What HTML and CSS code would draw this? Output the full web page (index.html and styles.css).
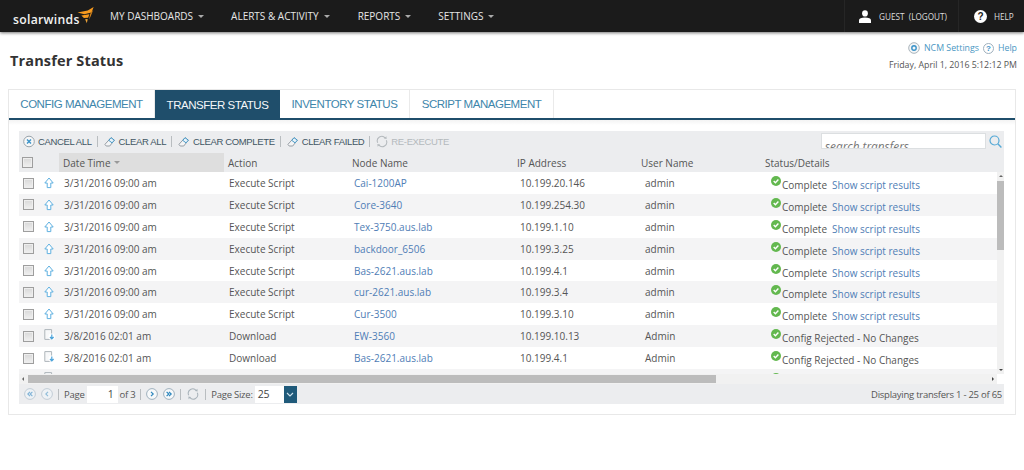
FILE: index.html
```html
<!DOCTYPE html>
<html lang="en">
<head>
<meta charset="utf-8">
<title>Transfer Status</title>
<link rel="stylesheet" href="styles.css">
</head>
<body>
<svg class="defs" width="0" height="0" aria-hidden="true">
  <symbol id="i-up" viewBox="0 0 10 12"><path d="M5 1 9.200 6H6.800v4.600H3.200V6H.8z" fill="#fff" stroke="#5fb0e0" stroke-width="1" stroke-linejoin="round"/></symbol>
  <symbol id="i-dl" viewBox="0 0 12 12"><path d="M.8.6h6.800v9.800H.8z" fill="#f7f8f9" stroke="#aeb5ba"/><circle cx="7.800" cy="7.800" r="3.300" fill="#fff"/><path d="M7.800 5.400v4.400M6 8l1.800 1.900L9.600 8" fill="none" stroke="#4ba3da" stroke-width="1.200"/></symbol>
  <symbol id="i-ok" viewBox="0 0 10 10"><circle cx="5" cy="5" r="5" fill="#63b84f"/><path d="M2.700 5.100 4.400 6.800 7.400 3.600" fill="none" stroke="#fff" stroke-width="1.400"/></symbol>
  <symbol id="i-eraser" viewBox="0 0 13 13"><path d="M1 9.600 7.600 2.400l3.600 2.600-5 6.400H2.400z" fill="#f4f5f6" stroke="#8f979e" stroke-linejoin="round"/><path d="M7.600 2.400l3.600 2.600-2.400 3-3.600-2.700z" fill="#e9f3f9" stroke="#3d94c6"/></symbol>
  <symbol id="i-refresh" viewBox="0 0 14 14"><path d="M2 8.400A5.200 5.200 0 0 1 10.800 3M12 5.600A5.200 5.200 0 0 1 3.200 11" fill="none" stroke="currentColor" stroke-width="1.200"/><path d="M9.400 3.600 12.400 4l-.3-3zM4.600 10.400 1.600 10l.3 3z" fill="currentColor"/></symbol>
  <symbol id="i-first" viewBox="0 0 12 12"><circle cx="6" cy="6" r="5.400" fill="#eef2f5" stroke="#c2cdd6"/><path d="M6 3.800 3.800 6 6 8.200M8.400 3.800 6.200 6l2.200 2.200" fill="none" stroke="#7fb2d6" stroke-width="1.100"/></symbol>
  <symbol id="i-prev" viewBox="0 0 12 12"><circle cx="6" cy="6" r="5.400" fill="#eef2f5" stroke="#c2cdd6"/><path d="M7 3.800 4.800 6 7 8.200" fill="none" stroke="#8fbcd9" stroke-width="1.100"/></symbol>
  <symbol id="i-next" viewBox="0 0 12 12"><circle cx="6" cy="6" r="5.400" fill="#f7f9fa" stroke="#9fb0bd"/><path d="M5 3.800 7.200 6 5 8.200" fill="none" stroke="#2d86bd" stroke-width="1.200"/></symbol>
  <symbol id="i-last" viewBox="0 0 12 12"><circle cx="6" cy="6" r="5.400" fill="#f7f9fa" stroke="#9fb0bd"/><path d="M3.600 3.800 5.800 6 3.600 8.200M6 3.800 8.200 6 6 8.200" fill="none" stroke="#2d86bd" stroke-width="1.200"/></symbol>
</svg>

<header class="topbar">
  <a class="logo">
    <span class="logo-text">solarwinds</span>
    <svg class="logo-flare" viewBox="0 0 20 20"><path d="M0 6.500 12 4 19 0 16.500 6.500 8 8.500Z" fill="#f79a1e"/><path d="M4.500 10 14 8.500 12.500 12.500 7.500 13Z" fill="#f79a1e"/><path d="M9 14.500 12 14 11 19Z" fill="#f0a63a"/><path d="M15 8 18.500 3.500 15.500 11 13.500 15Z" fill="#d9861a"/></svg>
  </a>
  <nav class="nav">
    <a class="nav-item">MY DASHBOARDS<i class="caret"></i></a>
    <a class="nav-item nav-alerts">ALERTS &amp; ACTIVITY<i class="caret"></i></a>
    <a class="nav-item">REPORTS<i class="caret"></i></a>
    <a class="nav-item">SETTINGS<i class="caret"></i></a>
  </nav>
  <div class="user-box">
    <svg class="user-icon" viewBox="0 0 12 13"><ellipse cx="6" cy="3.400" rx="2.900" ry="3.100" fill="#fff"/><path d="M0 13V10.200C0 8.400 2.400 7.400 6 7.400s6 1 6 2.800V13Z" fill="#fff"/></svg>
    <span class="top-label">GUEST&nbsp; (LOGOUT)</span>
  </div>
  <div class="help-box">
    <span class="help-icon">?</span>
    <span class="top-label">HELP</span>
  </div>
</header>

<section class="page-head">
  <h1 class="title">Transfer Status</h1>
  <div class="head-right">
    <div class="head-links">
      <svg class="mini" viewBox="0 0 12 12"><circle cx="6" cy="6" r="5.300" fill="#f4f6f7" stroke="#aab4bb"/><circle cx="6" cy="6" r="2.200" fill="none" stroke="#3a92c8" stroke-width="1.400"/></svg>
      <a class="link-blue">NCM Settings</a>
      <span class="mini-q">?</span>
      <a class="link-blue">Help</a>
    </div>
    <div class="head-date">Friday, April 1, 2016 5:12:12 PM</div>
  </div>
</section>

<main class="panel">
  <div class="tabs">
    <a class="tab tab-config">CONFIG MANAGEMENT</a>
    <a class="tab tab-active">TRANSFER STATUS</a>
    <a class="tab tab-inv">INVENTORY STATUS</a>
    <a class="tab tab-script">SCRIPT MANAGEMENT</a>
  </div>
  <div class="panel-body">
    <div class="toolbar">
      <button class="tool tool-cancel"><svg class="tool-icon" viewBox="0 0 12 12"><circle cx="6" cy="6" r="5.300" fill="#f6f7f8" stroke="#9aa4ab"/><path d="M4 4 8 8M8 4 4 8" stroke="#3a92c8" stroke-width="1.400"/></svg>CANCEL ALL</button>
      <span class="tool-sep"></span>
      <button class="tool"><svg class="tool-icon"><use href="#i-eraser"/></svg>CLEAR ALL</button>
      <span class="tool-sep"></span>
      <button class="tool"><svg class="tool-icon"><use href="#i-eraser"/></svg>CLEAR COMPLETE</button>
      <span class="tool-sep"></span>
      <button class="tool"><svg class="tool-icon"><use href="#i-eraser"/></svg>CLEAR FAILED</button>
      <span class="tool-sep"></span>
      <button class="tool tool-off"><svg class="tool-icon"><use href="#i-refresh"/></svg>RE-EXECUTE</button>
      <div class="search">
        <span class="search-box"><span class="search-text">search transfers</span></span>
        <svg class="search-icon" viewBox="0 0 13 13"><circle cx="5.500" cy="5.500" r="4.500" fill="none" stroke="#55a9d6" stroke-width="1.200"/><path d="M8.800 8.800 12.400 12.400" stroke="#55a9d6" stroke-width="1.400"/></svg>
      </div>
    </div>

    <div class="grid-head grid-cols">
      <span class="hc hc-check"><i class="check"></i></span>
      <span class="hc hc-sorted">Date Time<i class="sort"></i></span>
      <span class="hc">Action</span>
      <span class="hc">Node Name</span>
      <span class="hc">IP Address</span>
      <span class="hc">User Name</span>
      <span class="hc">Status/Details</span>
    </div>

    <div class="grid-view">
      <div class="rows">
        <div class="row grid-cols"><span class="c c-sel"><i class="check"></i><svg class="ti-up"><use href="#i-up"/></svg></span><span class="c c-date">3/31/2016 09:00 am</span><span class="c c-act">Execute Script</span><a class="c c-node">Cai-1200AP</a><span class="c c-ip">10.199.20.146</span><span class="c c-user">admin</span><span class="c c-stat"><svg class="ok"><use href="#i-ok"/></svg>Complete<a class="show">Show script results</a></span></div>
        <div class="row alt grid-cols"><span class="c c-sel"><i class="check"></i><svg class="ti-up"><use href="#i-up"/></svg></span><span class="c c-date">3/31/2016 09:00 am</span><span class="c c-act">Execute Script</span><a class="c c-node">Core-3640</a><span class="c c-ip">10.199.254.30</span><span class="c c-user">admin</span><span class="c c-stat"><svg class="ok"><use href="#i-ok"/></svg>Complete<a class="show">Show script results</a></span></div>
        <div class="row grid-cols"><span class="c c-sel"><i class="check"></i><svg class="ti-up"><use href="#i-up"/></svg></span><span class="c c-date">3/31/2016 09:00 am</span><span class="c c-act">Execute Script</span><a class="c c-node">Tex-3750.aus.lab</a><span class="c c-ip">10.199.1.10</span><span class="c c-user">admin</span><span class="c c-stat"><svg class="ok"><use href="#i-ok"/></svg>Complete<a class="show">Show script results</a></span></div>
        <div class="row alt grid-cols"><span class="c c-sel"><i class="check"></i><svg class="ti-up"><use href="#i-up"/></svg></span><span class="c c-date">3/31/2016 09:00 am</span><span class="c c-act">Execute Script</span><a class="c c-node">backdoor_6506</a><span class="c c-ip">10.199.3.25</span><span class="c c-user">admin</span><span class="c c-stat"><svg class="ok"><use href="#i-ok"/></svg>Complete<a class="show">Show script results</a></span></div>
        <div class="row grid-cols"><span class="c c-sel"><i class="check"></i><svg class="ti-up"><use href="#i-up"/></svg></span><span class="c c-date">3/31/2016 09:00 am</span><span class="c c-act">Execute Script</span><a class="c c-node">Bas-2621.aus.lab</a><span class="c c-ip">10.199.4.1</span><span class="c c-user">admin</span><span class="c c-stat"><svg class="ok"><use href="#i-ok"/></svg>Complete<a class="show">Show script results</a></span></div>
        <div class="row alt grid-cols"><span class="c c-sel"><i class="check"></i><svg class="ti-up"><use href="#i-up"/></svg></span><span class="c c-date">3/31/2016 09:00 am</span><span class="c c-act">Execute Script</span><a class="c c-node">cur-2621.aus.lab</a><span class="c c-ip">10.199.3.4</span><span class="c c-user">admin</span><span class="c c-stat"><svg class="ok"><use href="#i-ok"/></svg>Complete<a class="show">Show script results</a></span></div>
        <div class="row grid-cols"><span class="c c-sel"><i class="check"></i><svg class="ti-up"><use href="#i-up"/></svg></span><span class="c c-date">3/31/2016 09:00 am</span><span class="c c-act">Execute Script</span><a class="c c-node">Cur-3500</a><span class="c c-ip">10.199.3.10</span><span class="c c-user">admin</span><span class="c c-stat"><svg class="ok"><use href="#i-ok"/></svg>Complete<a class="show">Show script results</a></span></div>
        <div class="row alt grid-cols"><span class="c c-sel"><i class="check"></i><svg class="ti-dl"><use href="#i-dl"/></svg></span><span class="c c-date">3/8/2016 02:01 am</span><span class="c c-act">Download</span><a class="c c-node">EW-3560</a><span class="c c-ip">10.199.10.13</span><span class="c c-user">Admin</span><span class="c c-stat"><svg class="ok"><use href="#i-ok"/></svg>Config Rejected - No Changes</span></div>
        <div class="row grid-cols"><span class="c c-sel"><i class="check"></i><svg class="ti-dl"><use href="#i-dl"/></svg></span><span class="c c-date">3/8/2016 02:01 am</span><span class="c c-act">Download</span><a class="c c-node">Bas-2621.aus.lab</a><span class="c c-ip">10.199.4.1</span><span class="c c-user">Admin</span><span class="c c-stat"><svg class="ok"><use href="#i-ok"/></svg>Config Rejected - No Changes</span></div>
        <div class="row alt grid-cols"><span class="c c-sel"><i class="check"></i><svg class="ti-dl"><use href="#i-dl"/></svg></span><span class="c c-date"></span><span class="c c-act"></span><a class="c c-node"></a><span class="c c-ip"></span><span class="c c-user"></span><span class="c c-stat"><svg class="ok"><use href="#i-ok"/></svg></span></div>
      </div>
      <div class="vscroll">
        <i class="arrow-up"></i>
        <i class="vthumb"></i>
        <i class="arrow-down"></i>
      </div>
    </div>
    <div class="hbar">
      <div class="hscroll">
        <i class="arrow-left"></i>
        <i class="hthumb"></i>
        <i class="arrow-right"></i>
      </div>
      <div class="corner"></div>
    </div>

    <div class="pager">
      <svg class="pg-icon"><use href="#i-first"/></svg>
      <svg class="pg-icon"><use href="#i-prev"/></svg>
      <span class="pg-sep"></span>
      <span>Page</span>
      <span class="pg-input">1</span>
      <span>of 3</span>
      <span class="pg-sep"></span>
      <svg class="pg-icon"><use href="#i-next"/></svg>
      <svg class="pg-icon"><use href="#i-last"/></svg>
      <span class="pg-sep"></span>
      <svg class="pg-refresh"><use href="#i-refresh"/></svg>
      <span class="pg-sep"></span>
      <span>Page Size:</span>
      <span class="pg-size">25</span>
      <span class="pg-drop"><svg class="pg-chev" viewBox="0 0 8 5"><path d="M1 1 4 4 7 1" fill="none" stroke="#cfe3ee" stroke-width="1.100"/></svg></span>
      <span class="pg-count">Displaying transfers 1 - 25 of 65</span>
    </div>
  </div>
</main>
</body>
</html>
```

FILE: styles.css
```css
* { box-sizing: border-box; }
html, body { margin: 0; padding: 0; }
body {
  width: 1024px;
  height: 470px;
  overflow: hidden;
  background: #fff;
  font-family: "Open Sans", sans-serif;
  font-size: 10px;
  color: #555;
}
.defs { position: absolute; }

/* top bar */
.topbar {
  display: flex;
  align-items: center;
  height: 32px;
  background: #1b1b1b;
  box-shadow: 0 1px 3px rgba(0,0,0,.55);
  color: #e4e4e4;
  position: relative;
}
.logo { display: flex; align-items: flex-start; width: 110px; height: 32px; padding-left: 13px; }
.logo-text { font-size: 12.200px; font-weight: 600; color: #f2f2f2; margin-top: 11px; letter-spacing: .3px; line-height: 17px; }
.logo-flare { width: 18px; height: 17px; margin: 7px 0 0 -3px; flex: none; }
.nav { display: flex; flex: 1; }
.nav-item { display: flex; align-items: center; font-size: 10px; color: #e6e6e6; margin-right: 27px; white-space: nowrap; }
.nav-alerts { margin-right: 28px; }
.caret { width: 0; height: 0; margin-left: 5px; border: 3px solid transparent; border-top: 3px solid #aaa; border-bottom: 0; }
.user-box, .help-box { display: flex; align-items: center; height: 32px; border-left: 1px solid #262626; flex: none; }
.user-box { width: 114px; padding-left: 14px; }
.help-box { width: 66px; padding-left: 15px; }
.user-icon { width: 12px; height: 13px; margin-right: 8px; }
.top-label { font-size: 8.200px; color: #ddd; white-space: nowrap; }
.help-icon {
  width: 13px; height: 13px; border-radius: 50%; background: #fff; color: #1b1b1b;
  font: bold 10px/13px "Liberation Sans", sans-serif; text-align: center; margin-right: 7px;
}

/* page head */
.page-head {
  display: flex;
  justify-content: space-between;
  height: 57px;
  padding: 0 7px 0 10px;
}
.title { margin: 19px 0 0; font-size: 14.500px; line-height: 20px; font-weight: 700; color: #333; letter-spacing: .15px; }
.head-right { display: flex; flex-direction: column; align-items: flex-end; padding-top: 9px; }
.head-links { display: flex; align-items: center; height: 14px; font-size: 8.800px; }
.link-blue { color: #4a97c3; }
.mini { width: 12px; height: 12px; margin-right: 4px; }
.mini-q {
  width: 11px; height: 11px; margin: 0 4px 0 4px; border: 1px solid #9fb0bd; border-radius: 50%;
  font: bold 8px/9px "Liberation Sans", sans-serif; text-align: center; color: #3a92c8;
}
.head-date { font-size: 8.800px; line-height: 12px; margin-top: 4px; color: #555; }

/* panel */
.panel {
  margin: 0 8px;
  height: 326px;
  border: 1px solid #e8e8e8;
  background: #fff;
}
.tabs { display: flex; height: 30px; border-bottom: 2px solid #1f4e6b; }
.tab {
  display: flex; align-items: center; justify-content: center;
  font: 11.500px "Liberation Sans", sans-serif;
  letter-spacing: -.47px;
  white-space: nowrap;
  color: #3e86ab;
  border-right: 1px solid #eaeaea;
}
.tab-config { width: 146px; }
.tab-active { width: 125px; background: #1f4e6b; color: #f4f7f9; border-right: 0; margin-bottom: -2px; }
.tab-inv { width: 130px; }
.tab-script { width: 144px; }
.panel-body { padding: 11px 11px 0 10px; background: linear-gradient(#f3f3f3, #fff 5px); }

/* toolbar */
.toolbar {
  display: flex; align-items: center;
  height: 22px;
  padding: 0 0 2px 4px;
  background: #ecedef;
}
.tool {
  display: flex; align-items: center; padding: 0; border: 0; background: none;
  font: 9.500px "Liberation Sans", sans-serif; letter-spacing: -.36px; color: #3f5563; white-space: nowrap;
}
.tool-off { color: #b4b9bd; }
.tool-icon { width: 12px; height: 13px; margin-right: 3px; color: #b4b9bd; }
.tool-sep { width: 1px; height: 11px; margin: 0 6px 0 5px; background: #b9bdc0; }
.search { display: flex; align-items: center; margin-left: auto; padding-right: 2px; }
.search-box {
  display: block; width: 165px; height: 16px; padding-left: 3px; overflow: hidden;
  background: #fff; border: 1px solid #dcdfe1;
}
.search-text { display: block; font-size: 11.800px; font-style: italic; line-height: 24px; color: #777; white-space: nowrap; }
.search-icon { width: 13px; height: 13px; margin-left: 3px; }

/* grid */
.grid-cols {
  display: grid;
  grid-template-columns: 40px 165px 124px 165px 124px 124px 1fr;
}
.grid-head { height: 19px; background: #ecedef; align-items: stretch; padding-right: 7px; }
.hc { display: flex; align-items: center; padding-left: 4px; font-size: 10px; color: #555; }
.hc-check { padding-left: 3px; }
.hc-sorted { background: #dedede; }
.sort { width: 0; height: 0; margin-left: 3px; border: 3px solid transparent; border-top: 3px solid #999; border-bottom: 0; }
.check {
  display: block; flex: none; width: 11px; height: 11px; border: 1px solid #9e9e9e;
  background: linear-gradient(#d8d8d8, #f0f0f0); box-shadow: inset 0 0 0 1px #eee;
}

.grid-view { display: flex; height: 202px; overflow: hidden; }
.rows { flex: 1; min-width: 0; background: #fff; }
.row { height: 21.875px; align-items: center; background: #fff; }
.alt { background: #f4f4f5; }
.c { display: block; font-size: 10px; line-height: 22px; color: #555; white-space: nowrap; }
.c-sel { display: flex; align-items: center; padding-left: 4px; }
.ti-up { width: 10px; height: 12px; margin-left: 10px; }
.ti-dl { width: 12px; height: 12px; margin-left: 10px; margin-top: -3px; }
.c-date { padding-left: 5px; }
.c-act { padding-left: 5px; }
.c-node { padding-left: 6px; color: #4f7db5; }
.c-ip { padding-left: 7px; }
.c-user { padding-left: 8px; }
.c-stat { display: flex; align-items: center; padding-left: 10px; padding-top: 4px; height: 21.875px; line-height: 18px; }
.ok { width: 10px; height: 10px; margin: -8px 1px 0 0; flex: none; }
.show { margin-left: 5px; color: #4f7db5; }

.vscroll { position: relative; width: 7px; flex: none; background: #f1f1f1; }
.vthumb { position: absolute; left: 0; top: 9px; width: 7px; height: 69px; background: #bcbcbc; }
.arrow-up, .arrow-down, .arrow-left, .arrow-right { position: absolute; width: 0; height: 0; border: 2px solid transparent; }
.arrow-up { top: 3px; left: 1.500px; border-bottom-color: #666; border-top: 0; }
.arrow-down { bottom: 3px; left: 1.500px; border-top-color: #444; border-bottom: 0; }
.hbar { display: flex; height: 10px; }
.hscroll { position: relative; flex: 1; background: #f1f1f1; }
.corner { width: 7px; background: #fff; }
.hthumb { position: absolute; left: 9px; top: 1px; width: 688px; height: 8px; background: #bcbcbc; }
.arrow-left { left: 3px; top: 3px; border-right-color: #666; border-left: 0; }
.arrow-right { right: 3px; top: 3px; border-left-color: #444; border-right: 0; }

/* pager */
.pager {
  display: flex; align-items: center;
  height: 20px;
  padding: 0 2px 0 5px;
  background: #ecedef;
  font-size: 9.500px;
  letter-spacing: -.25px;
  color: #555;
  white-space: nowrap;
}
.pg-icon { width: 12px; height: 12px; flex: none; }
.pg-icon + .pg-icon { margin-left: 5px; }
.pg-sep { width: 1px; height: 11px; margin: 0 5px; background: #b9bdc0; flex: none; }
.pg-input { width: 31px; height: 17px; margin: 0 2px; padding-right: 4px; background: #fff; text-align: right; line-height: 17px; color: #444; font-size: 10.500px; }
.pg-refresh { width: 12px; height: 12px; margin: 0 1px; color: #a9b3ba; flex: none; }
.pg-size { width: 29px; height: 17px; margin-left: 2px; padding-left: 3px; background: #fff; line-height: 17px; font-size: 10.500px; color: #444; }
.pg-drop { display: flex; align-items: center; justify-content: center; width: 13px; height: 17px; background: #1f5a7a; }
.pg-chev { width: 8px; height: 5px; }
.pg-count { margin-left: auto; }
```
